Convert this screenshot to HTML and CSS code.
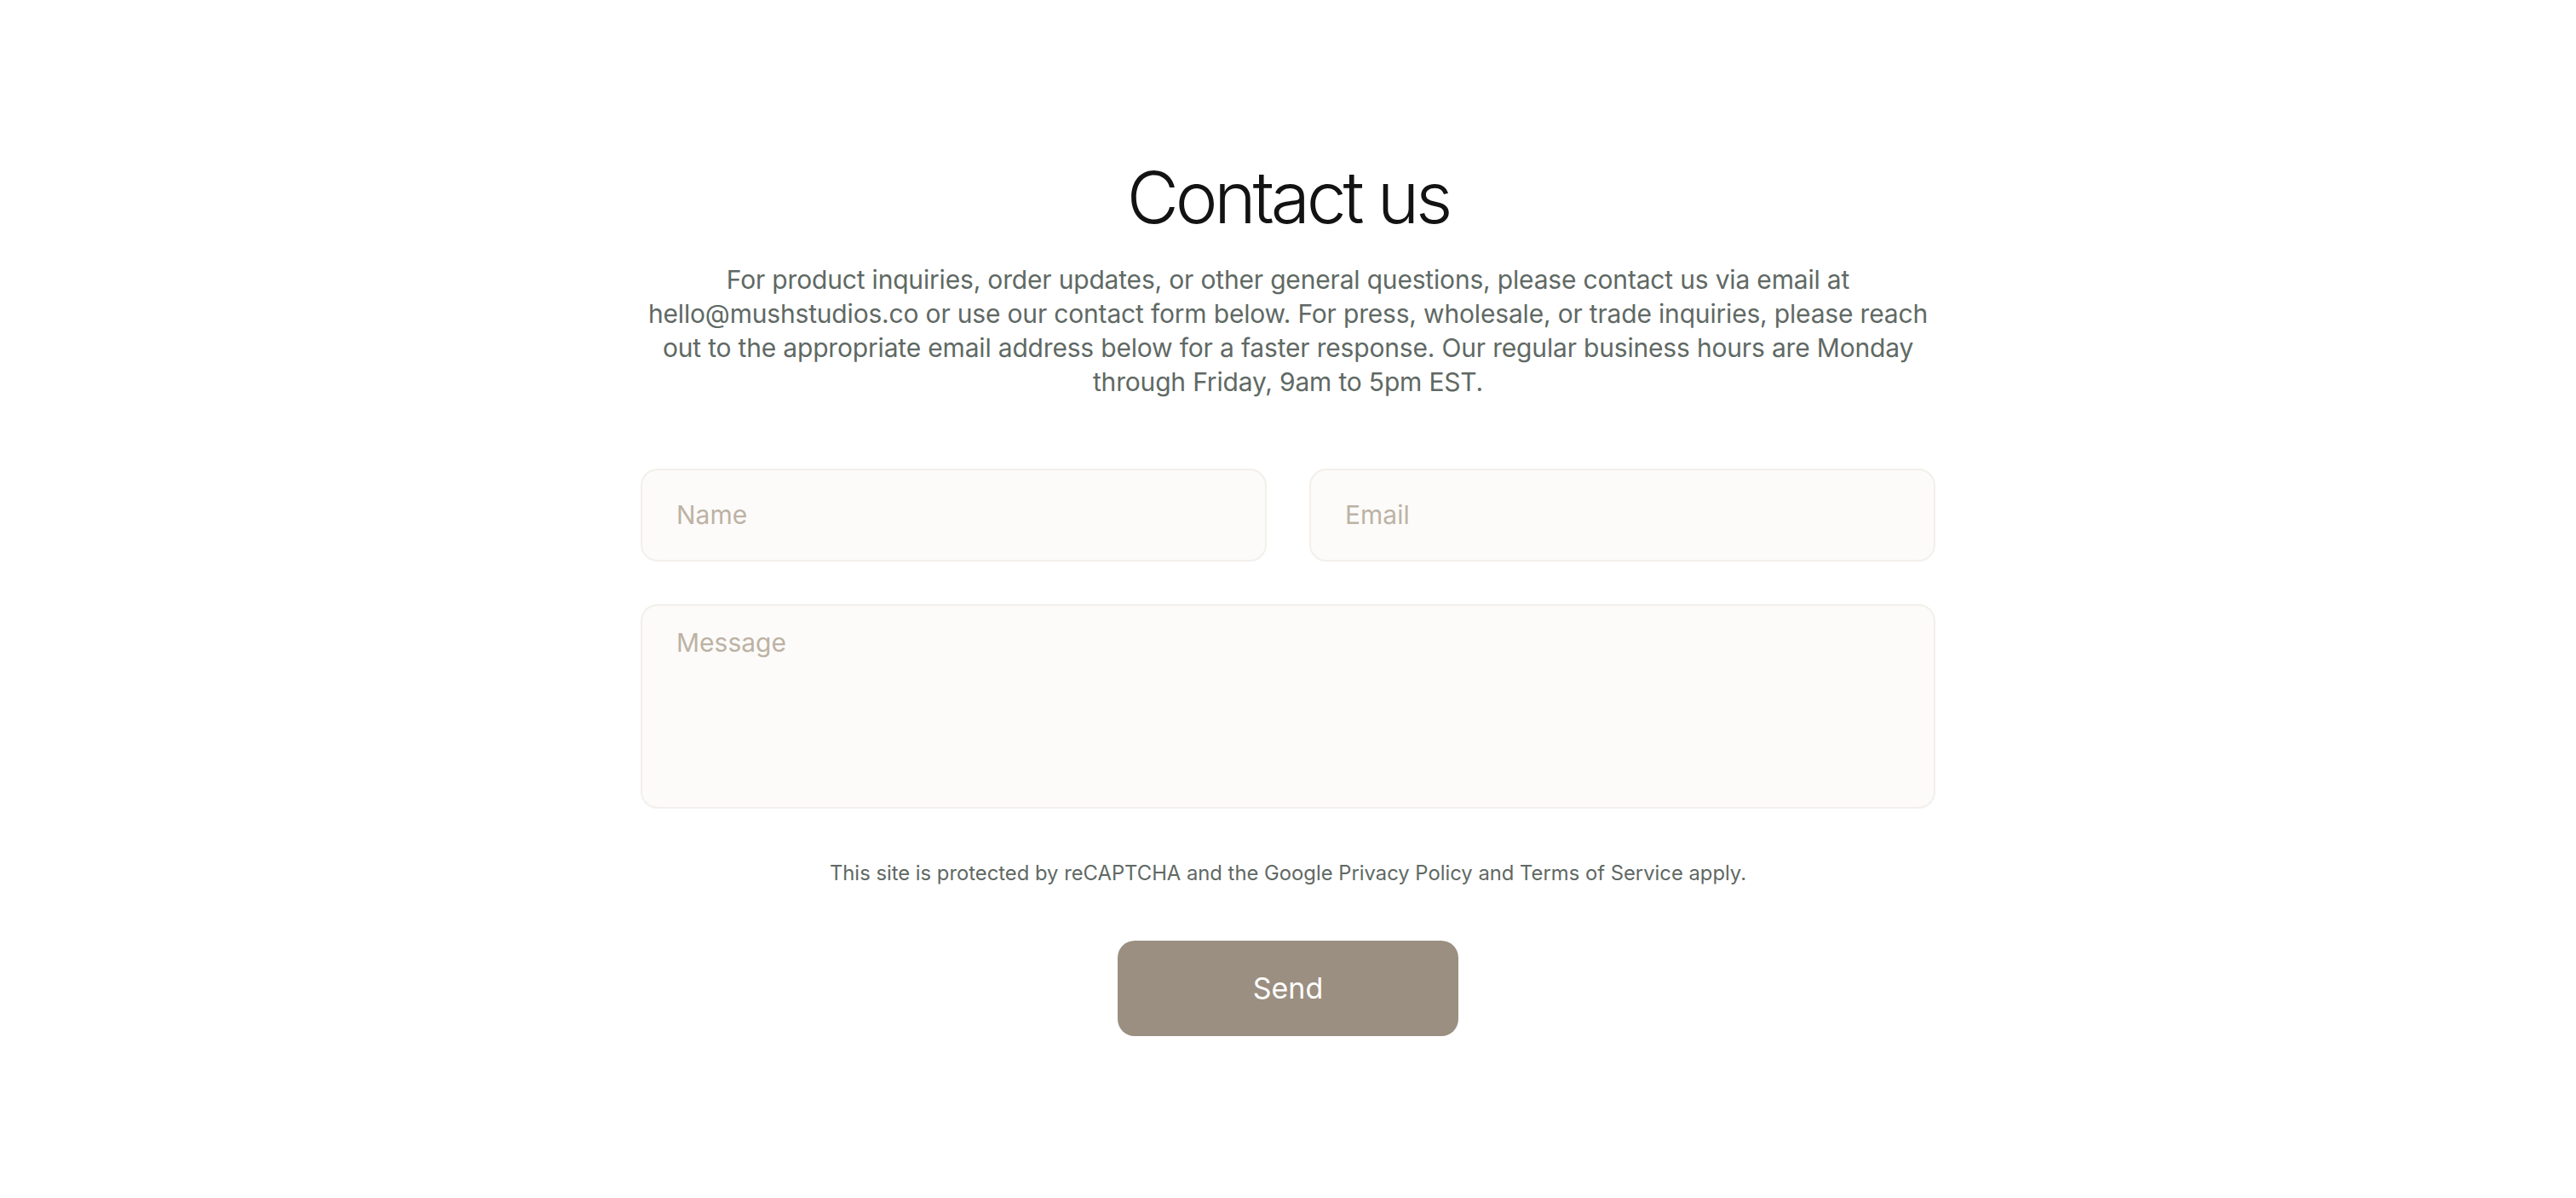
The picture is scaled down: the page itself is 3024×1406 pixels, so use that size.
FILE: index.html
```html
<!DOCTYPE html>
<html lang="en">
<head>
<meta charset="utf-8">
<title>Contact us</title>
<link rel="stylesheet" href="styles.css">
</head>
<body>
<main class="page">
  <section class="contact">
    <h1 class="contact-title">Contact us</h1>
    <p class="contact-intro">For product inquiries, order updates, or other general questions, please contact us via email at hello@mushstudios.co or use our contact form below. For press, wholesale, or trade inquiries, please reach out to the appropriate email address below for a faster response. Our regular business hours are Monday through Friday, 9am to 5pm EST.</p>
    <form class="contact-form">
      <div class="form-row">
        <input class="field" type="text" placeholder="Name">
        <input class="field" type="email" placeholder="Email">
      </div>
      <textarea class="field field-message" placeholder="Message"></textarea>
      <p class="recaptcha">This site is protected by reCAPTCHA and the Google Privacy Policy and Terms of Service apply.</p>
      <button class="send" type="button">Send</button>
    </form>
  </section>
</main>
</body>
</html>
```

FILE: styles.css
```css
* { box-sizing: border-box; }
html, body { margin: 0; padding: 0; background: #ffffff; }
body { font-family: Inter, "Liberation Sans", sans-serif; }

.page {
  display: flex;
  justify-content: center;
  padding-top: 182px;
}

.contact {
  width: 1520px;
  display: flex;
  flex-direction: column;
  align-items: center;
}

.contact-title {
  margin: 0;
  font-size: 84px;
  line-height: 1.2;
  font-weight: 300;
  letter-spacing: -0.05em;
  color: #131313;
}

.contact-intro {
  margin: 25px -10px 0;
  font-size: 30px;
  line-height: 40px;
  letter-spacing: -0.006em;
  color: #5f6964;
  text-align: center;
}

.contact-form {
  width: 100%;
  margin-top: 82px;
  display: flex;
  flex-direction: column;
  align-items: center;
}

.form-row {
  width: 100%;
  display: grid;
  grid-template-columns: 1fr 1fr;
  gap: 50px;
}

.field {
  width: 100%;
  height: 109px;
  padding: 0 40px;
  border: 2px solid #f3efea;
  border-radius: 20px;
  background: #fcfbf9;
  font-family: Inter, "Liberation Sans", sans-serif;
  font-size: 30px;
  color: #333;
  outline: none;
}

.field::placeholder { color: #bdb2a5; opacity: 1; }

.field-message {
  margin-top: 50px;
  height: 240px;
  padding: 22px 40px;
  line-height: 42px;
  resize: none;
  display: block;
}

.recaptcha {
  margin: 58px 0 0;
  font-size: 23.8px;
  line-height: 36px;
  color: #5f6964;
  text-align: center;
}

.send {
  margin-top: 61px;
  width: 400px;
  height: 112px;
  border: none;
  border-radius: 20px;
  background: #9b8f81;
  color: #ffffff;
  font-family: Inter, "Liberation Sans", sans-serif;
  font-size: 34px;
  font-weight: 400;
  cursor: pointer;
}
```
